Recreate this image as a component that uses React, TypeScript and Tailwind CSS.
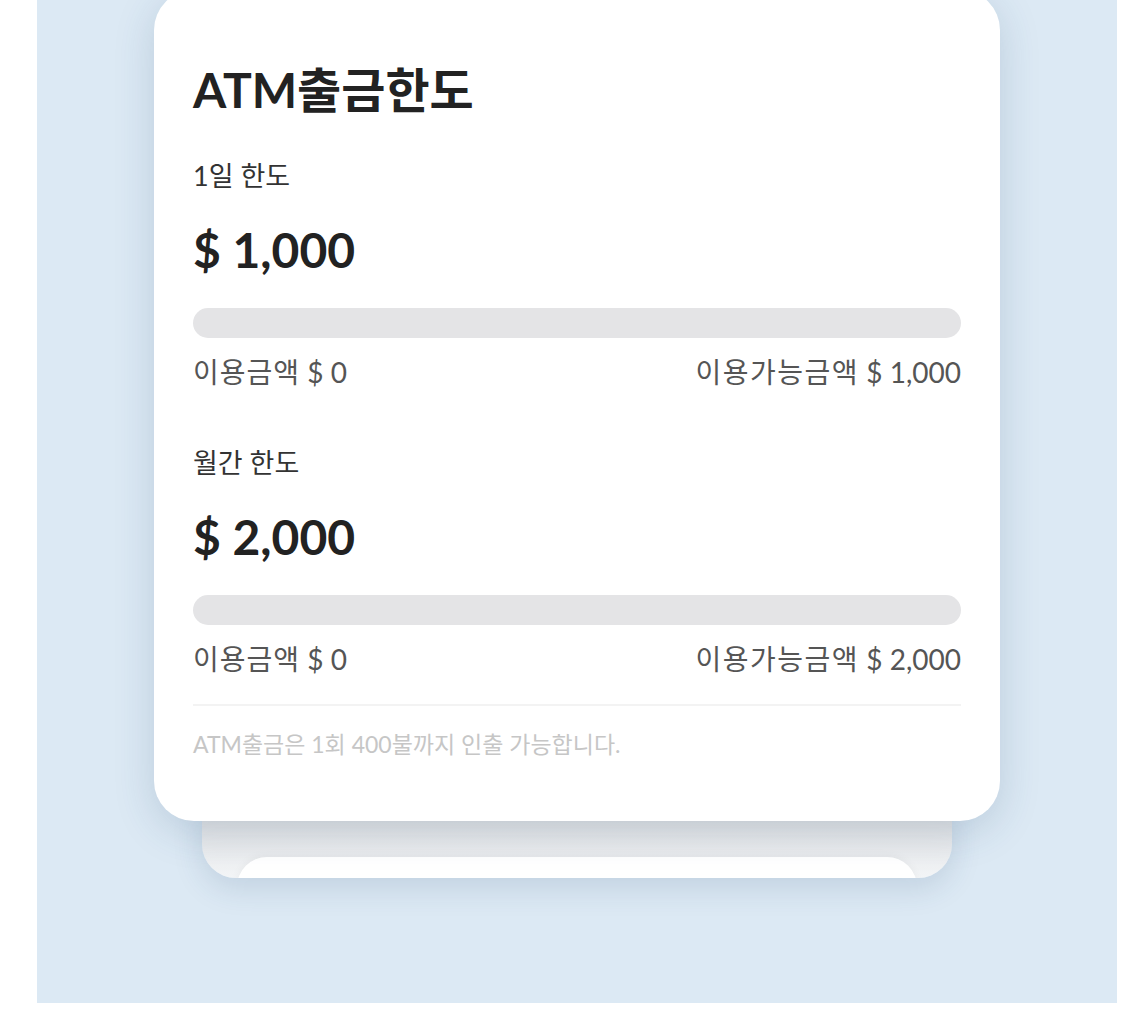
const font = "font-['Lato','Noto_Sans_CJK_KR',sans-serif]";

type Limit = {
  label: string;
  amount: string;
  used: string;
  available: string;
};

const limits: Limit[] = [
  { label: "1일 한도", amount: "$ 1,000", used: "$ 0", available: "$ 1,000" },
  { label: "월간 한도", amount: "$ 2,000", used: "$ 0", available: "$ 2,000" },
];

function LimitBlock({ limit }: { limit: Limit }) {
  return (
    <div className="flex flex-col">
      <p className="text-[27px] leading-[32px] text-[#333]">{limit.label}</p>
      <p className="mt-[30px] text-[48px] leading-[56px] font-bold text-[#222]">
        {limit.amount}
      </p>
      <div className="mt-[30px] h-[30px] w-full rounded-full bg-[#e4e4e6]" />
      <div className="mt-[17px] flex items-center justify-between text-[28px] leading-[34px] text-[#555]">
        <span>
          <span className="tracking-[1px]">이용금액</span> {limit.used}
        </span>
        <span>
          <span className="tracking-[1.5px]">이용가능금액</span> {limit.available}
        </span>
      </div>
    </div>
  );
}

export default function App() {
  return (
    <div className={`min-h-screen bg-white ${font}`}>
      <div className="ml-[37px] h-[1003px] w-[1080px] overflow-hidden bg-[#dce9f4]">
        <div className="flex flex-col items-center">
          {/* front card */}
          <div className="relative z-10 -mt-[10px] w-[846px] rounded-[40px] bg-white px-[39px] pb-[63px] pt-[72px] shadow-[0_10px_40px_rgba(40,75,115,0.18)]">
            <h1 className="text-[48px] leading-[56px] font-bold text-[#222]">
              ATM출금한도
            </h1>
            <div className="mt-[42px] flex flex-col gap-[58px]">
              {limits.map((l) => (
                <LimitBlock key={l.label} limit={l} />
              ))}
            </div>
            <div className="mt-[28px] border-t-2 border-[#f3f3f3] pt-[24px]">
              <p className="text-[23px] leading-[28px] text-[#c6c6c6]">
                ATM출금은 1회 400불까지 인출 가능합니다.
              </p>
            </div>
          </div>

          {/* stacked card behind */}
          <div className="relative -mt-[24px] h-[81px] w-[750px] overflow-hidden rounded-b-[34px] bg-gradient-to-b from-[#d9dadc] to-[#f3f5f7] shadow-[0_10px_30px_rgba(40,75,115,0.15)]">
            <div className="mx-auto mt-[60px] h-[60px] w-[680px] rounded-[30px] bg-white shadow-[0_-2px_8px_rgba(0,0,0,0.04)]" />
          </div>
        </div>
      </div>
    </div>
  );
}
